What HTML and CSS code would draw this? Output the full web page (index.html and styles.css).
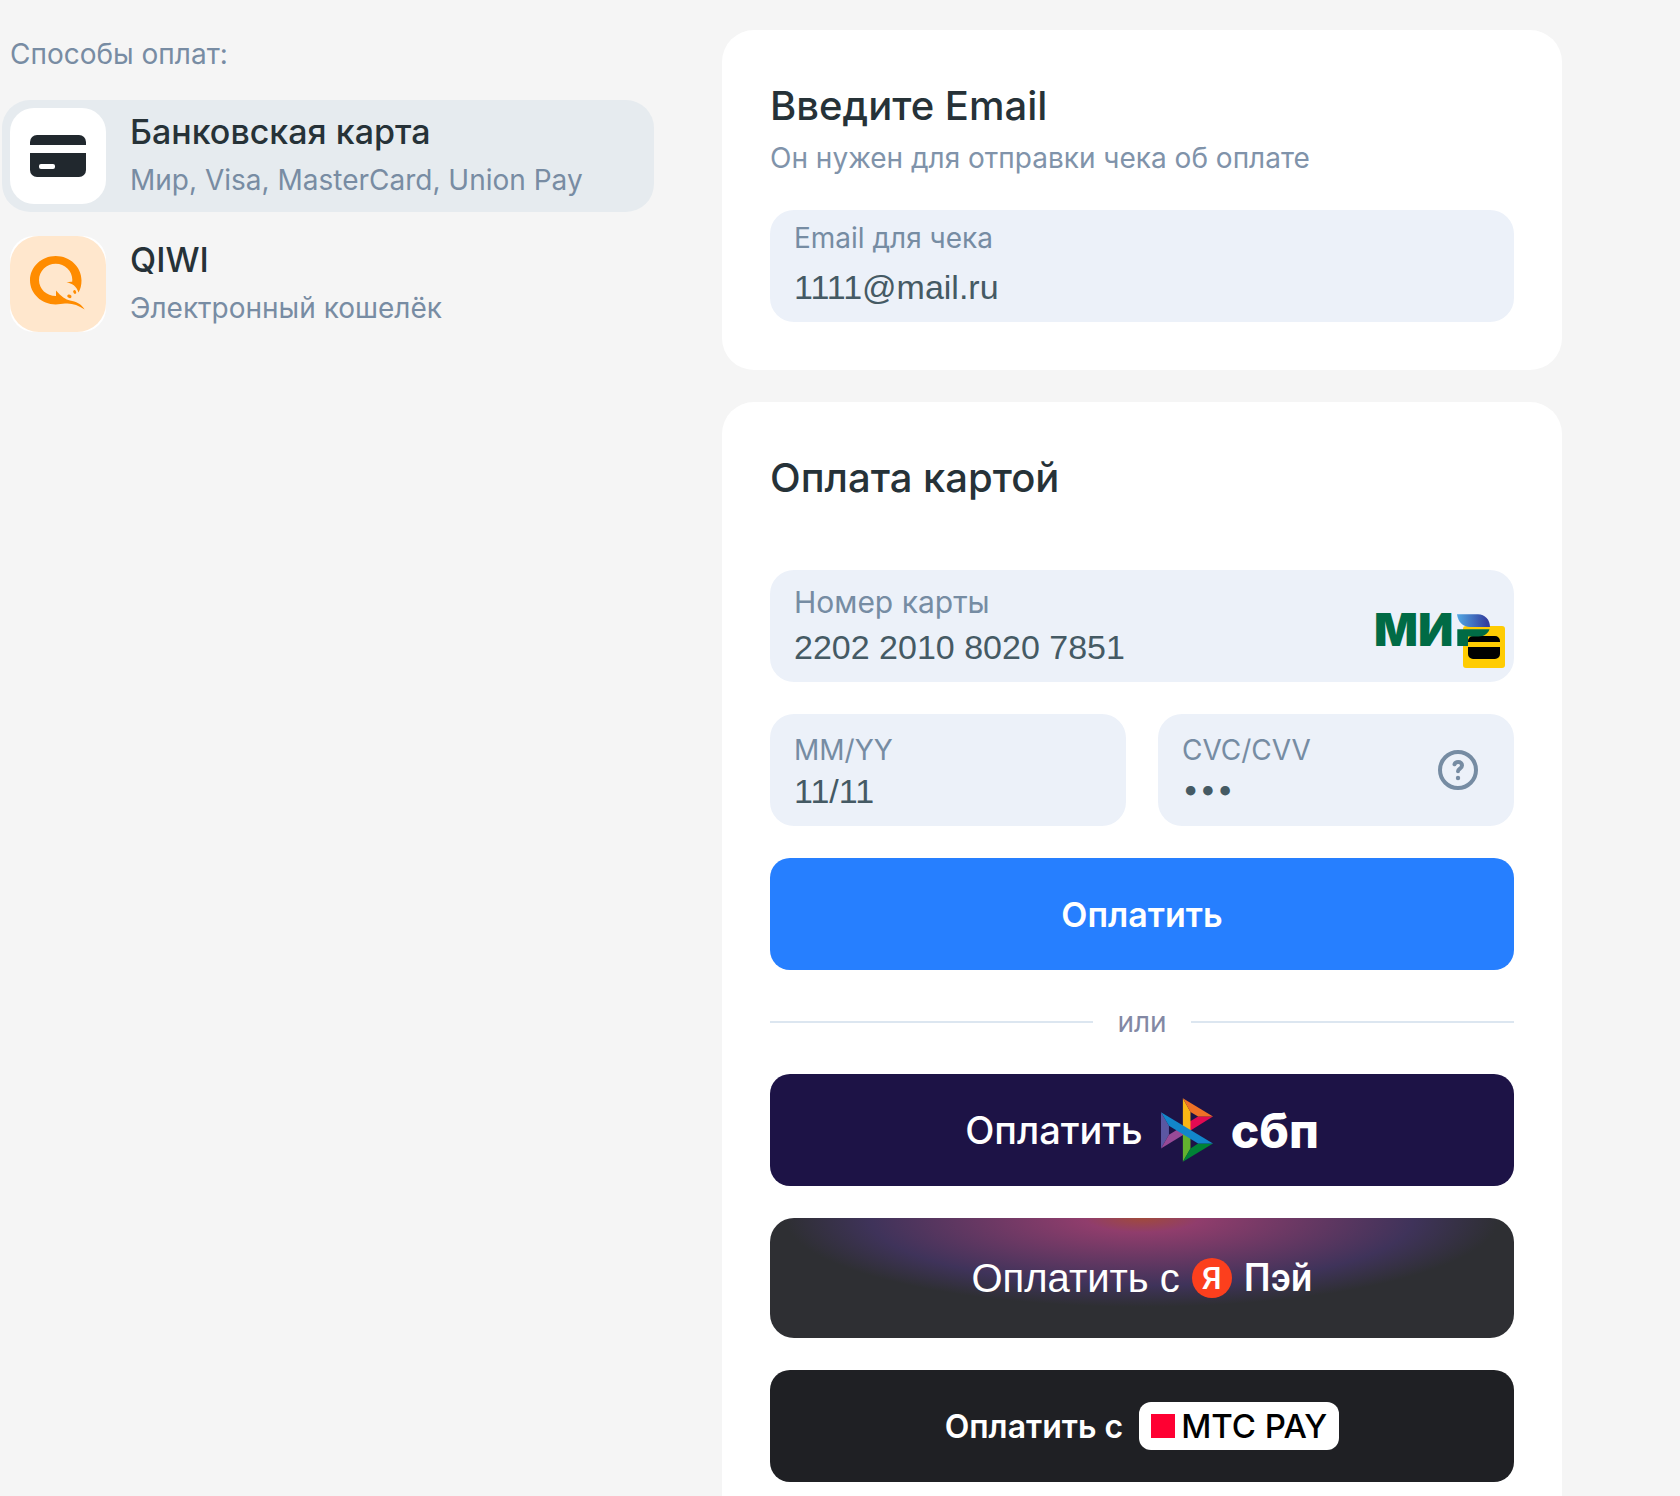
FILE: index.html
```html
<!DOCTYPE html>
<html lang="ru">
<head>
  <meta charset="UTF-8" />
  <meta name="viewport" content="width=device-width, initial-scale=1.0" />
  <title>Оплата</title>
  <link rel="stylesheet" href="styles.css">
</head>
<body>
  <div class="page">
    <aside class="methods">
      <h2 class="methods-title">Способы оплат:</h2>

      <button type="button" class="method active">
        <span class="method-icon">
          <svg viewBox="0 0 96 96" aria-hidden="true">
            <path fill="#21282e" d="M20 37v-3a7 7 0 0 1 7-7h42a7 7 0 0 1 7 7v3z" />
            <path fill="#21282e" d="M20 45h56v17a7 7 0 0 1-7 7H27a7 7 0 0 1-7-7z" />
            <rect x="29" y="56" width="16" height="5" rx="2" fill="#fff" />
          </svg>
        </span>
        <span class="method-text">
          <span class="method-name">Банковская карта</span>
          <span class="method-desc">Мир, Visa, MasterCard, Union Pay</span>
        </span>
      </button>

      <button type="button" class="method">
        <span class="method-icon">
          <svg viewBox="0 0 96 96" aria-hidden="true">
            <rect width="96" height="96" rx="29" fill="#ffe7cd" />
            <path fill="#ff8c00" d="M68.5 56.5C70.5 53 71.5 49 71.5 44.500C71.500 31 60 20 45.700 20S20 31 20 44.300S31.500 68.500 45.700 68.500C49 68.500 52 68 55 67.600C62 67 68 69 74.700 73.500C71 67.500 66 65.500 60 64.500C56 63.700 51 60.500 46 54.500L46 60C36.500 60 29 53 29 44S36.500 27.700 45.700 27.700S62.300 35 62.300 43.500L62.200 45.800C60 45.600 58.500 46 56.500 46.400C62 47 66.500 50 68.500 56.500Z" />
            <ellipse cx="64.700" cy="56" rx="1.400" ry="2" fill="#ff8c00" transform="rotate(-25 64.700 56)" />
            <ellipse cx="59.400" cy="60.300" rx="2.200" ry="1.700" fill="#ff8c00" transform="rotate(25 59.400 60.300)" />
          </svg>
        </span>
        <span class="method-text">
          <span class="method-name">QIWI</span>
          <span class="method-desc">Электронный кошелёк</span>
        </span>
      </button>
    </aside>

    <form class="payment">
      <section class="card">
        <h1 class="card-title">Введите Email</h1>
        <p class="card-subtitle">Он нужен для отправки чека об оплате</p>
        <div class="field">
          <div class="field-body">
            <label for="email">Email для чека</label>
            <input type="email" id="email" name="email" value="1111@mail.ru" />
          </div>
        </div>
      </section>

      <section class="card card-payment">
        <h1 class="card-title">Оплата картой</h1>

        <div class="field field-number">
          <div class="field-body">
            <label for="number">Номер карты</label>
            <input type="text" id="number" name="number" value="2202 2010 8020 7851" />
          </div>
          <svg class="mir" viewBox="0 0 130 54" role="img" aria-label="Мир">
            <defs>
              <linearGradient id="mirBlue" x1="0" x2="1">
                <stop offset="0" stop-color="#52a8e4" />
                <stop offset="0.900" stop-color="#3340a0" />
              </linearGradient>
            </defs>
            <rect x="87" y="12" width="42" height="42" rx="3" fill="#ffcc02" />
            <path fill="#000" d="M92 28v-1a5 5 0 0 1 5-5h22a5 5 0 0 1 5 5v1zM92 33h32v7a5 5 0 0 1-5 5H97a5 5 0 0 1-5-5z" />
            <path fill="url(#mirBlue)" d="M81 .300H102C109 .300 114 6 114 13H94C87 13 82 8 81 .300Z" />
            <path fill="#006b45" d="M81.300 15.300H113.500C112 20 108 22.500 102.500 22.500H92V32H81.300Z" />
            <text class="mir-text" x="-2" y="32">МИ</text>
          </svg>
        </div>

        <div class="field-row">
          <div class="field field-small">
            <div class="field-body">
              <label for="expiry">MM/YY</label>
              <input type="text" id="expiry" name="expiry" value="11/11" />
            </div>
          </div>
          <div class="field field-small">
            <div class="field-body">
              <label for="cvc">CVC/CVV</label>
              <input type="password" id="cvc" name="cvc" value="111" />
            </div>
            <button type="button" class="help" aria-label="Что такое CVC/CVV">
              <svg viewBox="0 0 40 40" fill="none" stroke="#768ca3" stroke-width="4" stroke-linecap="round" aria-hidden="true">
                <circle cx="20" cy="20" r="18" />
                <path d="M16.500 14.300C17 12.800 18.300 12 20.200 12C22.500 12 24 13.400 24 15.400C24 18.500 20 18.500 20 21.300" />
                <circle cx="20" cy="28" r="2.200" fill="#768ca3" stroke="none" />
              </svg>
            </button>
          </div>
        </div>

        <button type="submit" class="pay pay-card">Оплатить</button>

        <div class="divider"><span>или</span></div>

        <button type="button" class="pay pay-sbp">
          <span>Оплатить</span>
          <svg class="sbp-logo" viewBox="0 0 157 191" aria-hidden="true">
            <polygon fill="#5b57a2" points="0,42 24,83 24,110 0,151" />
            <polygon fill="#984a97" points="0,151 24,110 66,84 89,97" />
            <polygon fill="#e20a52" points="157,55 112,55 66,83 66,111" />
            <polygon fill="#fbb614" points="66,0 89,41 89,110 66,110" />
            <polygon fill="#ef7126" points="66,0 157,55 112,55 89,41" />
            <polygon fill="#63b22f" points="66,96 89,96 89,151 66,191" />
            <polygon fill="#008336" points="66,191 89,151 112,136 157,136" />
            <polygon fill="#1286cb" points="0,42 157,136 112,136 24,83" />
          </svg>
          <span class="sbp-text">сбп</span>
        </button>

        <button type="button" class="pay pay-yandex">
          <span>Оплатить с</span>
          <span class="ya-badge">Я</span>
          <span class="ya-text">Пэй</span>
        </button>

        <button type="button" class="pay pay-mts">
          <span>Оплатить с</span>
          <span class="mts-badge"><i class="mts-square"></i>МТС PAY</span>
        </button>
      </section>
    </form>
  </div>
</body>
</html>
```

FILE: styles.css
```css
* {
  box-sizing: border-box;
}
body {
  margin: 0;
  font-family: Inter, Arial, sans-serif;
  background-color: #f5f5f5;
  color: #263238;
}
button {
  border: none;
  font-family: inherit;
  color: inherit;
  cursor: pointer;
}
svg {
  display: block;
}
.page {
  display: grid;
  grid-template-columns: minmax(0, 652fr) minmax(0, 840fr);
  gap: 68px;
  align-items: start;
  padding: 30px 118px 0 2px;
}

/* payment methods */
.methods {
  display: flex;
  flex-direction: column;
  gap: 16px;
}
.methods-title {
  margin: 0;
  padding: 6px 8px 12px;
  font-size: 28px;
  line-height: 36px;
  font-weight: 400;
  color: #788ca3;
}
.method {
  display: flex;
  gap: 24px;
  padding: 8px;
  border-radius: 28px;
  background: none;
  text-align: left;
}
.method.active {
  background-color: #e6ebef;
}
.method-icon {
  width: 96px;
  height: 96px;
  flex: none;
  border-radius: 24px;
  background-color: #fff;
}
.method-text {
  display: flex;
  flex-direction: column;
  gap: 8px;
  padding-top: 2px;
}
.method-name {
  font-size: 34px;
  line-height: 44px;
  font-weight: 500;
}
.method-desc {
  font-size: 28px;
  line-height: 36px;
  color: #788ca3;
}

/* cards */
.payment {
  display: flex;
  flex-direction: column;
  gap: 32px;
}
.card {
  padding: 48px;
  border-radius: 32px;
  background-color: #fff;
}
.card-payment {
  display: flex;
  flex-direction: column;
  gap: 32px;
}
.card-title {
  margin: 0;
  font-size: 40px;
  line-height: 56px;
  font-weight: 500;
}
.card-payment .card-title {
  padding-bottom: 32px;
}
.card-subtitle {
  margin: 6px 0 34px;
  font-size: 28px;
  line-height: 36px;
  color: #8093aa;
}

/* fields */
.field {
  display: flex;
  align-items: center;
  min-height: 112px;
  padding-left: 24px;
  border-radius: 24px;
  background-color: #ecf1f9;
}
.field-body {
  flex: 1;
  min-width: 0;
  align-self: flex-end;
  display: flex;
  flex-direction: column;
  gap: 11px;
  padding-bottom: 15px;
}
.field label {
  font-size: 28px;
  line-height: 36px;
  color: #768ca3;
}
.field input {
  width: 100%;
  height: 40px;
  padding: 0;
  border: none;
  outline: none;
  background: none;
  font-family: "Liberation Sans", Arial, sans-serif;
  font-size: 34px;
  color: #455a64;
}
.field input[type="password"] {
  font-family: "DejaVu Sans", sans-serif;
  font-size: 27px;
  font-weight: 700;
}
.field-number .field-body {
  gap: 7px;
}
.field-number label {
  font-size: 30px;
}
.field-small .field-body {
  gap: 3px;
}
.field-row {
  display: grid;
  grid-template-columns: 1fr 1fr;
  gap: 32px;
}
.mir {
  width: 130px;
  height: 54px;
  align-self: flex-end;
  margin: 0 8px 14px 0;
  overflow: visible;
}
.mir-text {
  font-size: 46px;
  font-weight: 900;
  fill: #006b45;
}
.help {
  width: 40px;
  height: 40px;
  margin-right: 36px;
  padding: 0;
  background: none;
}

/* buttons */
.pay {
  display: flex;
  align-items: center;
  justify-content: center;
  width: 100%;
  min-height: 112px;
  padding: 0;
  border-radius: 20px;
  color: #fff;
}
.pay-card {
  background-color: #267fff;
  font-size: 34px;
  font-weight: 600;
}
.divider {
  display: flex;
  align-items: center;
  gap: 24px;
  font-size: 28px;
  line-height: 40px;
  color: #8388a4;
}
.divider::before,
.divider::after {
  content: "";
  flex: 1;
  height: 2px;
  background-color: #dce6f0;
}
.pay-sbp {
  gap: 18px;
  background-color: #1d1346;
  font-size: 38px;
  font-weight: 500;
}
.sbp-logo {
  width: 52px;
  height: 64px;
}
.sbp-text {
  font-size: 48px;
  font-weight: 800;
}
.pay-yandex {
  gap: 12px;
  min-height: 120px;
  border-radius: 24px;
  background: radial-gradient(ellipse 48% 74% at 50% 0, #a04a3c 0%, #903d6c 16%, #3f335a 76%, #2e2f33 100%);
  font-family: "Liberation Sans", Arial, sans-serif;
  font-size: 40px;
  font-weight: 400;
}
.ya-badge {
  display: flex;
  align-items: center;
  justify-content: center;
  width: 40px;
  height: 40px;
  border-radius: 50%;
  background-color: #fc3f1d;
  font-family: Roboto, sans-serif;
  font-size: 32px;
  font-weight: 500;
}
.ya-text {
  font-family: Roboto, sans-serif;
  font-size: 38px;
  font-weight: 500;
}
.pay-mts {
  gap: 16px;
  background-color: #1f2024;
  font-size: 32px;
  font-weight: 600;
}
.mts-badge {
  display: flex;
  align-items: center;
  gap: 6px;
  height: 48px;
  padding: 0 12px;
  border-radius: 12px;
  background-color: #fff;
  color: #000;
  font-size: 33px;
  font-weight: 500;
}
.mts-square {
  width: 24px;
  height: 24px;
  background-color: #ff0032;
}
```
